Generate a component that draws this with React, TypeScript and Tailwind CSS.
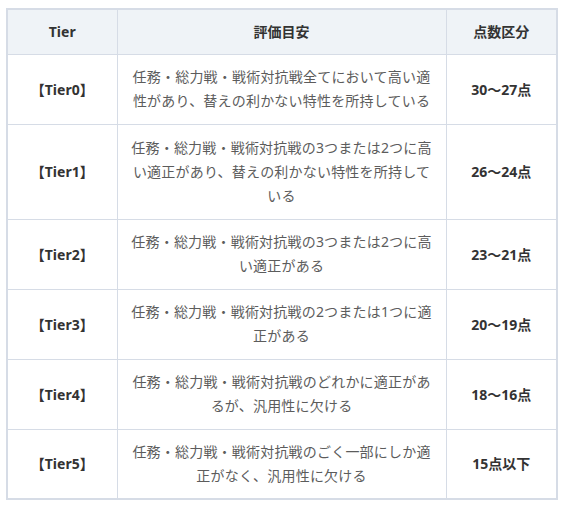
const rows = [
  {
    tier: "【Tier0】",
    desc: "任務・総力戦・戦術対抗戦全てにおいて高い適性があり、替えの利かない特性を所持している",
    score: "30～27点",
    tall: false,
  },
  {
    tier: "【Tier1】",
    desc: "任務・総力戦・戦術対抗戦の3つまたは2つに高い適正があり、替えの利かない特性を所持している",
    score: "26～24点",
    tall: true,
  },
  {
    tier: "【Tier2】",
    desc: "任務・総力戦・戦術対抗戦の3つまたは2つに高い適正がある",
    score: "23～21点",
    tall: false,
  },
  {
    tier: "【Tier3】",
    desc: "任務・総力戦・戦術対抗戦の2つまたは1つに適正がある",
    score: "20～19点",
    tall: false,
  },
  {
    tier: "【Tier4】",
    desc: "任務・総力戦・戦術対抗戦のどれかに適正があるが、汎用性に欠ける",
    score: "18～16点",
    tall: false,
  },
  {
    tier: "【Tier5】",
    desc: "任務・総力戦・戦術対抗戦のごく一部にしか適正がなく、汎用性に欠ける",
    score: "15点以下",
    tall: false,
  },
];

export default function App() {
  return (
    <div
      className="w-[562px] h-[506px] bg-white pt-2 pl-[6px]"
      style={{ fontFamily: '"Noto Sans", "Noto Sans CJK JP", sans-serif' }}
    >
      <table className="w-[550px] border-collapse border-2 border-[#d6dce6] table-fixed text-[14px]">
        <colgroup>
          <col className="w-[110px]" />
          <col className="w-[329px]" />
          <col className="w-[111px]" />
        </colgroup>
        <thead>
          <tr className="h-[45px] bg-[#eff3f7]">
            <th className="border border-[#d6dce6] font-bold text-[#333] text-center align-middle">Tier</th>
            <th className="border border-[#d6dce6] font-bold text-[#333] text-center align-middle">評価目安</th>
            <th className="border border-[#d6dce6] font-bold text-[#333] text-center align-middle">点数区分</th>
          </tr>
        </thead>
        <tbody>
          {rows.map((r) => (
            <tr key={r.tier} className={r.tall ? "h-[95px]" : "h-[70px]"}>
              <td className="border border-[#d6dce6] font-bold text-[#333] text-center align-middle">{r.tier}</td>
              <td className="border border-[#d6dce6] text-[#5c5c5c] text-center align-middle px-[13px] py-[10px] leading-[24px] tracking-[0.2px]">
                {r.desc}
              </td>
              <td className="border border-[#d6dce6] font-bold text-[#333] text-center align-middle">{r.score}</td>
            </tr>
          ))}
        </tbody>
      </table>
    </div>
  );
}
